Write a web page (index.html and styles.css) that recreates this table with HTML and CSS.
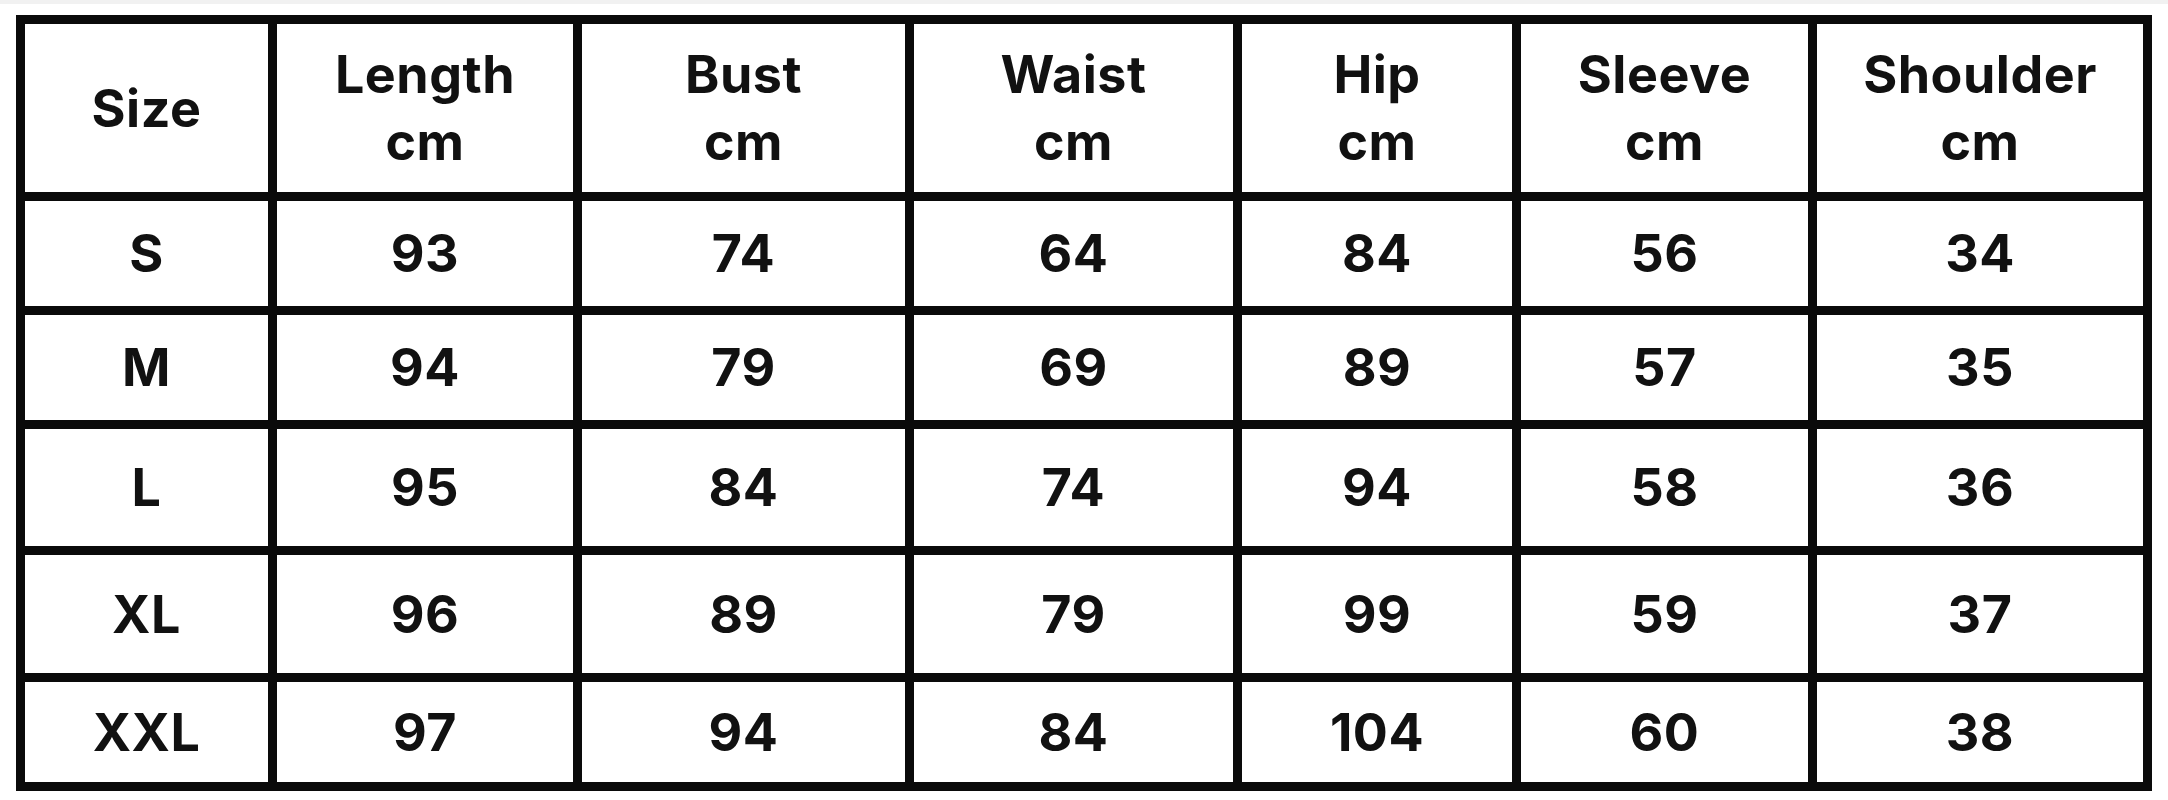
FILE: index.html
```html
<!DOCTYPE html>
<html>
<head>
<meta charset="utf-8">
<link rel="stylesheet" href="styles.css">
</head>
<body>
<div class="topstrip"></div>
<div class="chart">
  <div class="cell">Size</div>
  <div class="cell">Length<br>cm</div>
  <div class="cell">Bust<br>cm</div>
  <div class="cell">Waist<br>cm</div>
  <div class="cell">Hip<br>cm</div>
  <div class="cell">Sleeve<br>cm</div>
  <div class="cell">Shoulder<br>cm</div>

  <div class="cell">S</div>
  <div class="cell">93</div>
  <div class="cell">74</div>
  <div class="cell">64</div>
  <div class="cell">84</div>
  <div class="cell">56</div>
  <div class="cell">34</div>

  <div class="cell">M</div>
  <div class="cell">94</div>
  <div class="cell">79</div>
  <div class="cell">69</div>
  <div class="cell">89</div>
  <div class="cell">57</div>
  <div class="cell">35</div>

  <div class="cell">L</div>
  <div class="cell">95</div>
  <div class="cell">84</div>
  <div class="cell">74</div>
  <div class="cell">94</div>
  <div class="cell">58</div>
  <div class="cell">36</div>

  <div class="cell">XL</div>
  <div class="cell">96</div>
  <div class="cell">89</div>
  <div class="cell">79</div>
  <div class="cell">99</div>
  <div class="cell">59</div>
  <div class="cell">37</div>

  <div class="cell">XXL</div>
  <div class="cell">97</div>
  <div class="cell">94</div>
  <div class="cell">84</div>
  <div class="cell">104</div>
  <div class="cell">60</div>
  <div class="cell">38</div>
</div>
</body>
</html>
```

FILE: styles.css
```css
html, body {
  margin: 0;
  padding: 0;
  background: #ffffff;
}

body {
  width: 2168px;
  height: 800px;
  overflow: hidden;
  font-family: "Inter", "Lato", "Liberation Sans", sans-serif;
}

.topstrip {
  height: 4px;
  background: #f1f1f1;
}

.chart {
  display: grid;
  grid-template-columns: 243px 296px 323px 319px 270px 287px 326px;
  grid-template-rows: 168px 105px 105px 117px 118px 100px;
  gap: 9px;
  padding: 9px;
  background: #0a0a0a;
  width: max-content;
  margin: 11px 0 0 16px;
}

.cell {
  background: #ffffff;
  display: flex;
  align-items: center;
  justify-content: center;
  text-align: center;
  font-weight: 700;
  font-size: 52px;
  line-height: 67px;
  letter-spacing: 0.5px;
  color: #111111;
}
```
